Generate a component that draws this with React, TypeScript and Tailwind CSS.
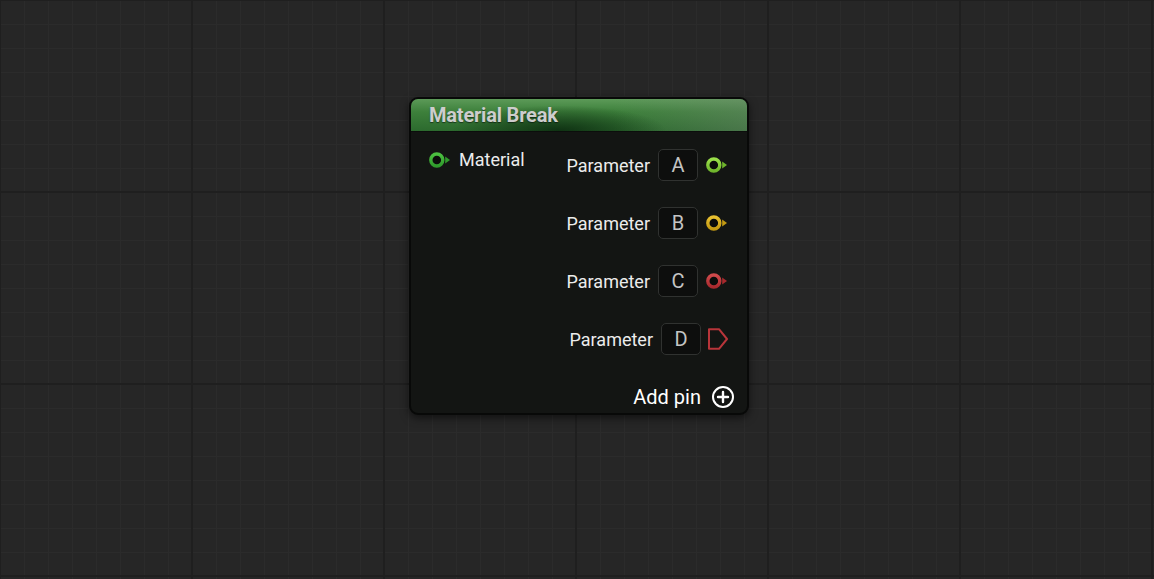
import React from "react";

type Pin = { letter: string; kind: "ring" | "exec"; color: string; light: string };

const pins: Pin[] = [
  { letter: "A", kind: "ring", color: "#6fb52c", light: "#9be04a" },
  { letter: "B", kind: "ring", color: "#c49a12", light: "#e8c030" },
  { letter: "C", kind: "ring", color: "#a8292d", light: "#d04a4c" },
  { letter: "D", kind: "exec", color: "#b8353a", light: "#d04a4c" },
];

function RingPin({ color, light }: { color: string; light: string }) {
  return (
    <svg width="22" height="16" viewBox="0 0 22 16" className="shrink-0">
      <defs>
        <linearGradient id={`g-${color}`} x1="0" y1="0" x2="0" y2="1">
          <stop offset="0" stopColor={light} />
          <stop offset="1" stopColor={color} />
        </linearGradient>
      </defs>
      <circle cx="7.8" cy="8" r="6" fill="#0b0c0b" stroke={`url(#g-${color})`} strokeWidth="3.4" />
      <path d="M16.2 4.6 L21 8 L16.2 11.4 Z" fill={color} />
    </svg>
  );
}

function ExecPin({ color }: { color: string }) {
  return (
    <svg width="20" height="22" viewBox="0 0 20 22" className="shrink-0">
      <path
        d="M1 1.2 H11 L19 11 L11 20.8 H1 Z"
        fill="none"
        stroke={color}
        strokeWidth="2"
        strokeLinejoin="round"
      />
    </svg>
  );
}

function AddIcon() {
  return (
    <svg width="24" height="24" viewBox="0 0 24 24" className="shrink-0">
      <circle cx="12" cy="12" r="10" fill="none" stroke="#ffffff" strokeWidth="2" />
      <path d="M12 7 V17 M7 12 H17" stroke="#ffffff" strokeWidth="2.4" strokeLinecap="round" />
    </svg>
  );
}

export default function App() {
  return (
    <div
      className="relative w-[1154px] h-[579px] overflow-hidden bg-[#262626] bg-[image:linear-gradient(to_right,#1f1f1f_2px,transparent_2px),linear-gradient(to_bottom,#1f1f1f_2px,transparent_2px),linear-gradient(to_right,#2b2b2b_1px,transparent_1px),linear-gradient(to_bottom,#2b2b2b_1px,transparent_1px)] bg-[size:192px_192px,192px_192px,24px_24px,24px_24px] bg-[position:-1px_-1px,-1px_-1px,0_0,0_0]"
      style={{ fontFamily: "Roboto, 'Noto Sans', sans-serif" }}
    >
      <div className="absolute left-[409px] top-[97px] w-[340px] h-[318px] rounded-[9px] border-2 border-[#080908] bg-[#131513] shadow-[0_3px_8px_rgba(0,0,0,0.55)] flex flex-col overflow-hidden">
        <div className="h-[33px] shrink-0 flex items-center pl-[18px] bg-[image:radial-gradient(ellipse_32%_80%_at_44%_100%,rgba(12,44,16,0.9)_0%,transparent_100%),linear-gradient(to_right,transparent_60%,rgba(115,135,115,0.4)_100%),linear-gradient(to_bottom,#5c9a58_0%,#3d803b_40%,#2c6a2e_100%)] border-b border-[#0c0e0c]">
          <span className="text-[20px] font-bold text-[#cdcdcd] tracking-[-0.2px] [text-shadow:0_1px_1px_rgba(0,0,0,0.5)]">
            Material Break
          </span>
        </div>
        <div className="flex justify-between flex-1">
          <div className="pl-[18px] pt-[17px]">
            <div className="flex items-center gap-[8px] h-[22px]">
              <RingPin color="#2f9a2c" light="#4cc040" />
              <span className="text-[18px] text-[#ececec] leading-none">Material</span>
            </div>
          </div>
          <div className="flex flex-col items-end gap-[26px] pt-[17px] pr-[19px]">
            {pins.map((p) => (
              <div key={p.letter} className="flex items-center h-[32px]">
                <span className="text-[18px] text-[#ececec] mr-[8px]">Parameter</span>
                <div className="w-[40px] h-[32px] rounded-[5px] border border-[#303230] bg-[#0d0e0d] flex items-center justify-center text-[20px] text-[#c4c4c4]">
                  {p.letter}
                </div>
                <div className={p.kind === "ring" ? "ml-[8px]" : "ml-[7px]"}>
                  {p.kind === "ring" ? <RingPin color={p.color} light={p.light} /> : <ExecPin color={p.color} />}
                </div>
              </div>
            ))}
            <div className="flex items-center h-[32px] -mr-[7px] gap-[10px]">
              <span className="text-[20px] text-white">Add pin</span>
              <AddIcon />
            </div>
          </div>
        </div>
      </div>
    </div>
  );
}
